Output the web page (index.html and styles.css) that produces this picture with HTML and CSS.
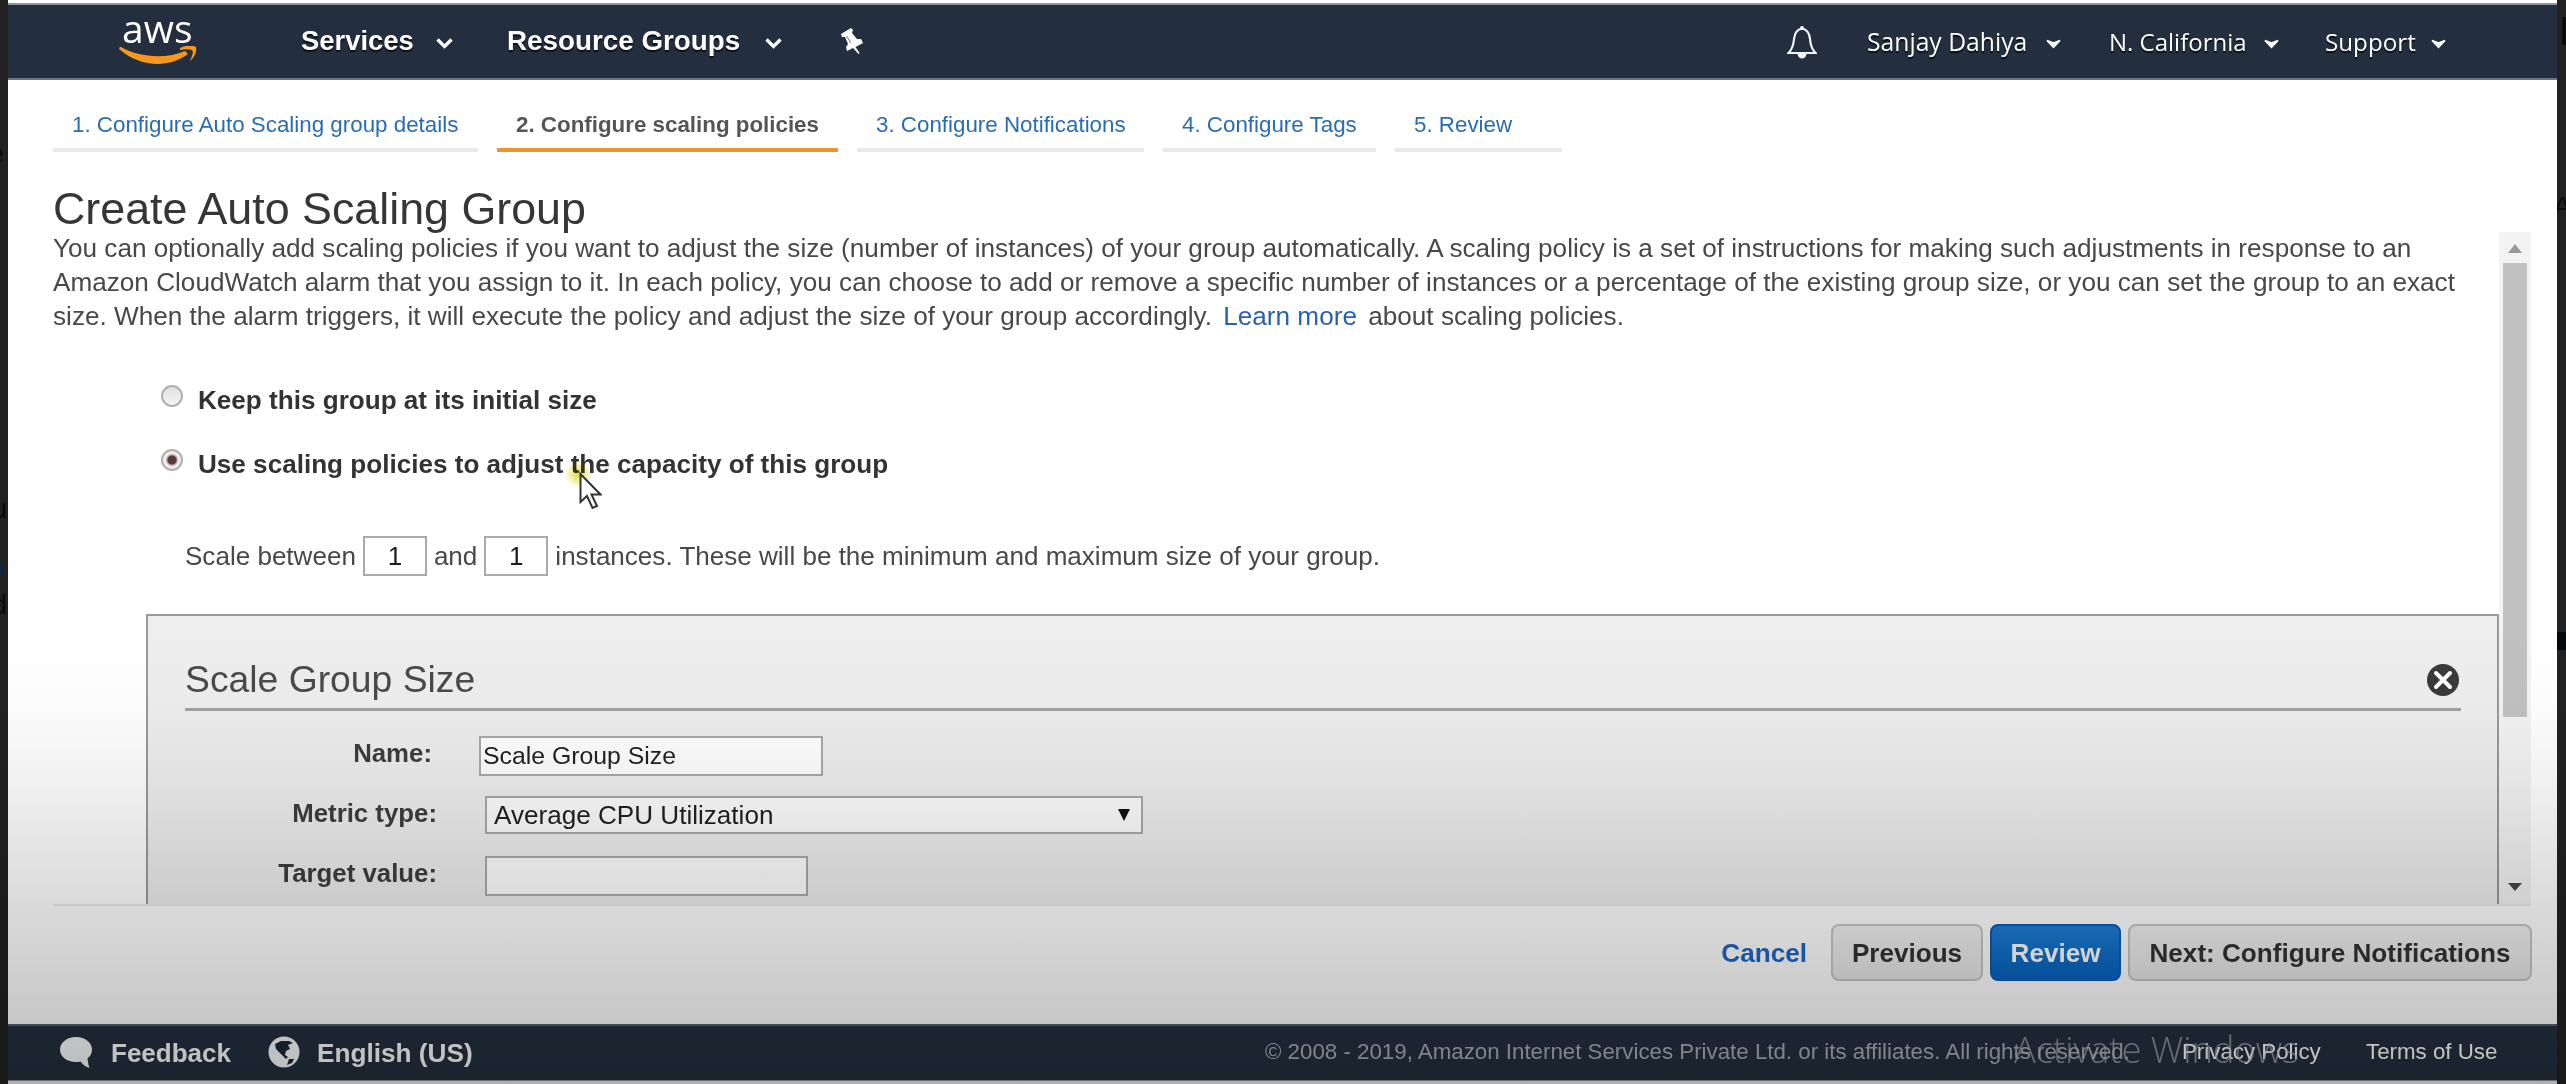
FILE: index.html
```html
<!DOCTYPE html>
<html lang="en">
<head>
<meta charset="utf-8">
<title>Create Auto Scaling Group</title>
<link rel="stylesheet" href="styles.css">
</head>
<body>
<div class="frame">
  <aside class="edge edge-left">
    <span class="bleed b1">e</span><span class="bleed b2">u</span><span class="bleed b3 blue">o</span><span class="bleed b4">d</span>
  </aside>
  <div class="screen">
    <header class="nav">
      <div class="logo">
        <span class="logo-text">aws</span>
        <svg class="smile" viewBox="0 0 80 20"><path d="M1 0.500C20 12 48 13 66 5L69 8C50 22 22 22 0 3Z" fill="#f7981d"/><path d="M61 2C67-1 73-1 77 1C78 6 75 12 71 15C73 10 75 6 73 4C70 3 66 3 61 4Z" fill="#f7981d"/></svg>
      </div>
      <nav class="menu">
        <a class="services">Services</a>
        <svg class="chev chev-1" viewBox="0 0 17 11"><path d="M1.500 1.500L8.500 8.500L15.500 1.500" fill="none" stroke="#fff" stroke-width="3.300"/></svg>
        <a class="resource">Resource Groups</a>
        <svg class="chev chev-2" viewBox="0 0 17 11"><path d="M1.500 1.500L8.500 8.500L15.500 1.500" fill="none" stroke="#fff" stroke-width="3.300"/></svg>
        <svg class="pin" viewBox="0 0 24 28"><path d="M1 6L11 0L13 2L12 5L17 11L21 11L23 15L15.500 19L19.500 25L18.500 26L13 20L7 23L6 19L8 16L5 9L2 9Z" fill="#fff"/><path d="M6.500 8L11 15" stroke="#8b94a3" stroke-width="1.300"/></svg>
      </nav>
      <div class="account">
        <svg class="bell" viewBox="0 0 30 34"><path d="M15 2.500C9.500 3.500 7.500 8 7 13C6.500 19 5 23.500 1.500 27H28.500C25 23.500 23.500 19 23 13C22.500 8 20.500 3.500 15 2.500Z" fill="none" stroke="#f1f5fa" stroke-width="2.200"/><circle cx="15" cy="2" r="2" fill="#f1f5fa"/><path d="M10.500 28H19.500C19 31 17 32.500 15 32.500S11 31 10.500 28Z" fill="#f1f5fa"/></svg>
        <a class="user">Sanjay Dahiya</a>
        <svg class="chev small" viewBox="0 0 15 10"><path d="M1 1.500L7.500 4L14 1.500L7.500 8.500Z" fill="#fff" stroke="#fff" stroke-width="1.500"/></svg>
        <a class="region">N. California</a>
        <svg class="chev small" viewBox="0 0 15 10"><path d="M1 1.500L7.500 4L14 1.500L7.500 8.500Z" fill="#fff" stroke="#fff" stroke-width="1.500"/></svg>
        <a class="support">Support</a>
        <svg class="chev small" viewBox="0 0 15 10"><path d="M1 1.500L7.500 4L14 1.500L7.500 8.500Z" fill="#fff" stroke="#fff" stroke-width="1.500"/></svg>
      </div>
    </header>

    <main class="page">
      <div class="tabs">
        <a class="tab t1">1. Configure Auto Scaling group details</a>
        <a class="tab t2 active">2. Configure scaling policies</a>
        <a class="tab t3">3. Configure Notifications</a>
        <a class="tab t4">4. Configure Tags</a>
        <a class="tab t5">5. Review</a>
      </div>
      <h1>Create Auto Scaling Group</h1>
      <div class="viewport">
        <div class="content">
          <p class="intro">You can optionally add scaling policies if you want to adjust the size (number of instances) of your group automatically. A scaling policy is a set of instructions for making such adjustments in response to an<br>Amazon CloudWatch alarm that you assign to it. In each policy, you can choose to add or remove a specific number of instances or a percentage of the existing group size, or you can set the group to an exact<br>size. When the alarm triggers, it will execute the policy and adjust the size of your group accordingly. <a class="learn">Learn more</a> about scaling policies.</p>
          <div class="choices">
            <label class="choice"><span class="radio"></span>Keep this group at its initial size</label>
            <label class="choice"><span class="radio checked"></span>Use scaling policies to adjust the capacity of this group</label>
          </div>
          <div class="between">
            <span>Scale between</span><span class="num">1</span><span>and</span><span class="num">1</span><span>instances. These will be the minimum and maximum size of your group.</span>
          </div>
          <section class="panel">
            <div class="panel-head">
              <h2>Scale Group Size</h2>
              <svg class="close" viewBox="0 0 32 32"><circle cx="16" cy="16" r="16" fill="#3a3a3a"/><path d="M9 9L23 23M23 9L9 23" stroke="#fff" stroke-width="4" stroke-linecap="round"/></svg>
            </div>
            <div class="row name-row"><span class="label">Name:</span><span class="field name">Scale Group Size</span></div>
            <div class="row metric-row"><span class="label">Metric type:</span><span class="field metric">Average CPU Utilization<svg class="arrow" viewBox="0 0 12 12"><path d="M0 0H12L6 12Z"/></svg></span></div>
            <div class="row target-row"><span class="label">Target value:</span><span class="field target"></span></div>
          </section>
        </div>
        <div class="scrollbar">
          <svg class="sb-up" viewBox="0 0 14 9"><path d="M0 9L7 0L14 9Z" fill="#999"/></svg>
          <div class="thumb"></div>
          <svg class="sb-down" viewBox="0 0 14 8"><path d="M0 0H14L7 8Z" fill="#444"/></svg>
        </div>
      </div>
      <div class="actions">
        <a class="cancel">Cancel</a>
        <span class="btn prev">Previous</span>
        <span class="btn review">Review</span>
        <span class="btn next">Next: Configure Notifications</span>
      </div>
    </main>

    <footer class="foot">
      <svg class="bubble" viewBox="0 0 32 31"><path d="M16 0C7 0 0 5.500 0 12.500C0 20 7 25 16 25C18 25 19 25 20.500 24.500C23 28 26 30 29.500 31C28.500 28 28 25 27.500 21.500C30.500 19 32 16 32 12.500C32 5.500 25 0 16 0Z" fill="#fbfdfe"/></svg>
      <a class="feedback">Feedback</a>
      <svg class="globe" viewBox="0 0 32 32"><circle cx="16" cy="16" r="15.500" fill="#fbfdfe"/><path d="M7 8L13 5L21 5L25 7L20 9L22 13L18 15L17 19L20 21L18 23L13 18L8 13Z" fill="#1e2937"/><path d="M21 23L26 23L24 27L19 29Z" fill="#1e2937"/></svg>
      <a class="lang">English (US)</a>
      <div class="legal">
        <span class="copy">© 2008 - 2019, Amazon Internet Services Private Ltd. or its affiliates. All rights reserved.</span>
        <a class="privacy">Privacy Policy</a>
        <a class="terms">Terms of Use</a>
      </div>
      <span class="watermark">Activate Windows</span>
    </footer>
    <div class="sill"></div>
  </div>
  <aside class="edge edge-right">
    <span class="bleed r1">E</span><span class="bleed r2">A</span>
    <i class="block"></i>
  </aside>
  <div class="shade"></div>
  <div class="glow"></div>
  <svg class="cursor" viewBox="0 0 23 38"><path d="M1.500 2V30L8 24L13.500 36L18 34L12.500 22.500H21.500Z" fill="#fff" stroke="#333" stroke-width="2"/></svg>
</div>
</body>
</html>
```
FILE: styles.css
```css
* { box-sizing: border-box; }
body { margin: 0; font-family: "Liberation Sans", Arial, sans-serif; font-size: 26.15px; line-height: 34px; color: #484848; }
svg { display: block; flex: none; }
span, a { white-space: nowrap; }
.frame { position: relative; display: flex; width: 2566px; height: 1084px; overflow: hidden; background: #212121; }
.edge { position: relative; flex: none; overflow: hidden; background: #212121; }
.edge-left { width: 8px; }
.edge-right { width: 9px; }
.bleed { position: absolute; right: 4px; color: #0b0b0b; font-size: 28px; }
.b1 { top: 137px; }
.b2 { top: 492px; right: 1px; }
.b3 { top: 552px; right: 5px; }
.blue { color: #0a2a55; }
.b4 { top: 588px; right: 1px; }
.r1 { top: 14px; left: 2px; right: auto; font-size: 40px; }
.r2 { top: 190px; left: -4px; right: auto; }
.block { position: absolute; left: 0; top: 632px; width: 9px; height: 18px; background: #050708; }

.screen { flex: none; width: 2549px; display: flex; flex-direction: column; background: #fff; }
.nav { flex: none; height: 77px; margin-top: 3px; border-top: 2px solid #8d949c; border-bottom: 2px solid #6e7784; background: #232f3e; color: #fff; display: flex; align-items: flex-start; }
.logo { width: 78px; margin: 0 0 0 111px; }
.logo-text { display: block; margin: 2px 0 0 3px; font-family: "Open Sans", sans-serif; font-size: 39px; line-height: 42px; height: 39px; font-weight: 500; }
.smile { width: 80px; height: 20px; }
.menu { display: flex; margin-left: 104px; padding-top: 19px; font-weight: bold; font-size: 27.4px; text-shadow: 0 2px 1px #0a0f16; }
.services { width: 135px; }
.chev { width: 17px; height: 11px; margin-top: 14px; }
.resource { width: 258px; margin-left: 54px; font-size: 27.8px; }
.pin { width: 24px; height: 28px; margin: 4px 0 0 58px; }
.account { display: flex; margin-left: auto; padding: 20px 111px 0 0; font-family: "Open Sans", sans-serif; font-size: 24.2px; line-height: 34px; text-shadow: 0 2px 1px #0a0f16; }
.bell { width: 30px; height: 34px; margin: 1px 50px 0 0; }
.small { width: 15px; height: 10px; margin-top: 14px; }
.user { width: 179px; font-size: 24.7px; }
.region { width: 155px; margin-left: 48px; font-size: 24px; }
.support { width: 106px; margin-left: 46px; }

.page { flex: none; height: 944px; padding-left: 45px; display: flex; flex-direction: column; }
.tabs { display: flex; gap: 19px; padding-top: 28px; font-size: 22.35px; color: #2a6cb2; }
.tab { height: 44px; padding: 0 0 0 19px; line-height: 34px; border-bottom: 4px solid #e9e9e9; }
.tab.active { color: #555; font-weight: bold; border-bottom-color: #f0932a; }
.t1 { width: 425px; }
.t2 { width: 341px; }
.t3 { width: 287px; }
.t4 { width: 213px; }
.t5 { width: 167px; }
h1 { margin: 30px 0 -2px; font-size: 44.8px; line-height: 52px; font-weight: normal; color: #363636; }
.viewport { flex: none; width: 2478px; height: 674px; display: flex; overflow: hidden; border-bottom: 2px solid #ececec; }
.content { width: 2446px; flex: none; }
.intro { margin: -1px 0 0; white-space: nowrap; }
.learn { margin: 0 4px; color: #2a62a8; }
.choices { display: flex; flex-direction: column; gap: 30px; margin: 50px 0 0 108px; font-weight: bold; font-size: 26.1px; color: #333; }
.choice { display: flex; height: 34px; }
.radio { width: 22px; height: 22px; margin: 2px 15px 0 0; border: 2px solid #b0b0b0; border-radius: 50%; background: linear-gradient(#e0e0e0, #f4f4f4); }
.checked { background: radial-gradient(circle, #5a3a38 0 4px, #b89a98 5px, #eee 6.5px); }
.between { display: flex; align-items: center; gap: 7px; height: 40px; margin: 55px 0 0 132px; font-size: 26.05px; }
.num { width: 64px; height: 40px; line-height: 36px; border: 2px solid #a9a9a9; background: #fff; color: #1b1b1b; text-align: center; }
.panel { height: 480px; margin: 38px 0 0 93px; padding: 41px 36px 0 37px; border: 2px solid #999; background: #eee; }
.panel-head { display: flex; justify-content: space-between; height: 54px; border-bottom: 3px solid #a2a2a2; }
h2 { margin: 0; font-size: 37.3px; line-height: 44px; font-weight: normal; color: #4a4a4a; }
.close { width: 32px; height: 32px; margin: 7px 2px 0 0; }
.row { display: flex; gap: 48px; align-items: flex-start; }
.label { width: 252px; text-align: right; font-weight: bold; font-size: 25.8px; color: #3e3e3e; }
.field { display: flex; border: 2px solid #a9a9a9; background: #fff; color: #222; }
.name-row { margin-top: 25px; }
.name-row .label { width: 247px; }
.name-row { gap: 47px; }
.name { width: 344px; height: 40px; padding-left: 2px; line-height: 36px; font-size: 24.8px; }
.metric-row { margin-top: 20px; }
.metric { width: 658px; height: 38px; padding: 0 11px 0 7px; line-height: 35px; justify-content: space-between; font-size: 26.1px; background: #fdfdfd; }
.arrow { width: 12px; height: 12px; margin-top: 11px; fill: #111; }
.target-row { margin-top: 22px; }
.target { width: 323px; height: 40px; }
.scrollbar { width: 32px; padding-right: 1px; background: #f3f3f3; display: flex; flex-direction: column; align-items: center; }
.sb-up { width: 14px; height: 9px; margin-top: 12px; }
.thumb { width: 24px; height: 454px; margin-top: 10px; background: #c1c1c1; }
.sb-down { width: 14px; height: 8px; margin-top: auto; margin-bottom: 13px; }
.actions { display: flex; justify-content: flex-end; align-items: flex-start; margin-top: 18px; padding-right: 25px; font-weight: bold; }
.cancel { margin: 12px 24px 0 0; color: #1f66c4; }
.btn { height: 57px; line-height: 55px; text-align: center; border: 2px solid #c6c6c6; border-radius: 8px; background: linear-gradient(#f1f1f1, #e7e7e7); color: #333; font-size: 26.1px; }
.prev { width: 152px; }
.review { width: 131px; margin: 0 7px; color: #fff; border-color: #0a5cb8; background: linear-gradient(#1d7ed6, #0562bd); }
.next { width: 404px; }

.foot { position: relative; flex: none; height: 56px; border-top: 2px solid #59606c; background: #232f3e; color: #fff; display: flex; align-items: flex-start; }
.bubble { width: 32px; height: 31px; margin: 11px 0 0 52px; }
.feedback { width: 121px; margin: 10px 36px 0 19px; font-weight: bold; font-size: 26px; }
.globe { width: 32px; height: 32px; margin-top: 10px; }
.lang { margin: 10px 0 0 17px; font-weight: bold; font-size: 26.2px; }
.legal { display: flex; margin: 9px 59px 0 auto; font-size: 22.3px; }
.copy { width: 917px; color: #a9aeb5; }
.privacy { width: 184px; }
.terms { width: 132px; }
.watermark { position: absolute; left: 2006px; top: 3px; font-family: "Open Sans", sans-serif; font-weight: 300; font-size: 36.3px; line-height: 40px; color: rgba(190, 195, 200, 0.65); }
.sill { flex: none; height: 4px; border-top: 1px solid #8d929a; background: #ececf0; }

/* Player-style darkening over the lower part of the screen */
.shade { position: absolute; left: 0; right: 0; top: 620px; bottom: 0; pointer-events: none; background: linear-gradient(rgba(0,0,0,0), rgba(0,0,0,.01) 80px, rgba(0,0,0,.055) 160px, rgba(0,0,0,.145) 284px, rgba(0,0,0,.22) 403px, rgba(0,0,0,.26)); }
.glow { position: absolute; left: 564px; top: 460px; width: 28px; height: 28px; border-radius: 50%; background: radial-gradient(circle, rgba(222, 214, 20, .85), rgba(222, 214, 20, 0) 70%); mix-blend-mode: multiply; }
.cursor { position: absolute; left: 579px; top: 472px; width: 23px; height: 38px; }
```
